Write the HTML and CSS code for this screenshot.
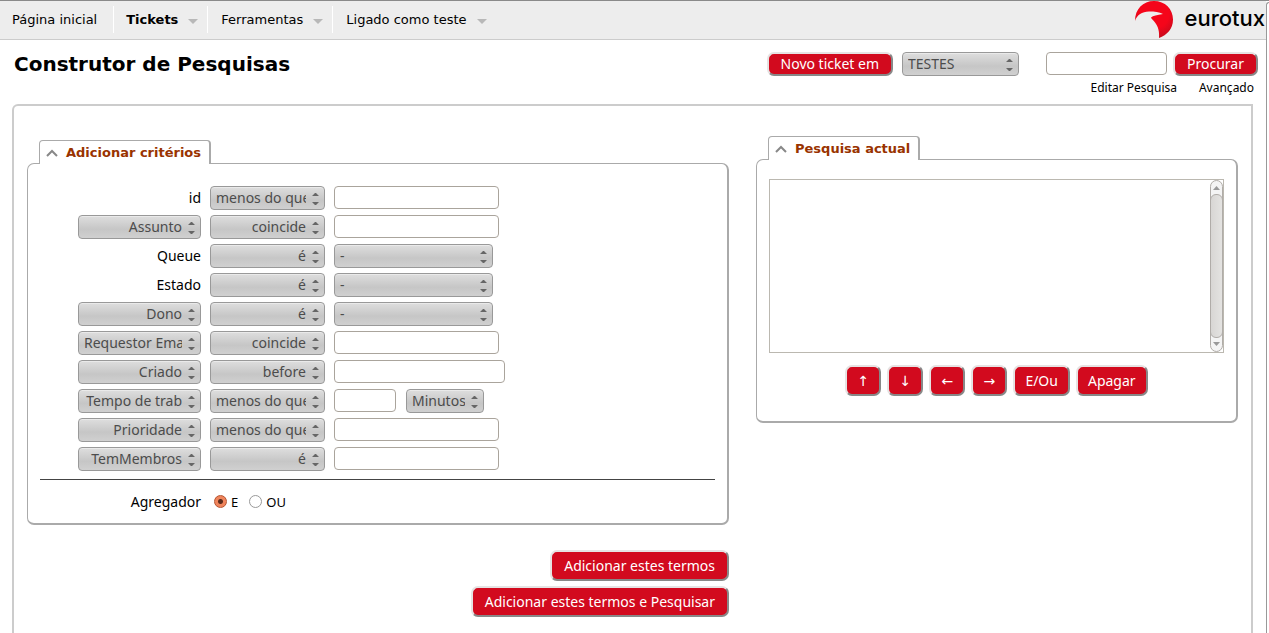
FILE: index.html
```html
<!DOCTYPE html>
<html lang="pt">
<head>
<meta charset="utf-8">
<title>Construtor de Pesquisas</title>
<link rel="stylesheet" href="styles.css">
</head>
<body>
<div class="page">
  <header class="topbar">
    <nav class="menu" aria-label="Principal">
      <a class="menu-item" href="#">Página inicial</a>
      <a class="menu-item menu-current" href="#">Tickets<span class="caret"></span></a>
      <a class="menu-item" href="#">Ferramentas<span class="caret"></span></a>
      <a class="menu-item" href="#">Ligado como teste<span class="caret"></span></a>
    </nav>
    <a class="brand" href="#">
      <svg class="brand-mark" viewBox="0 0 40 38" width="40" height="38" aria-hidden="true">
        <defs><radialGradient id="red" cx=".5" cy=".35" r=".65"><stop offset=".6" stop-color="#f5051a"/><stop offset="1" stop-color="#c90a1c"/></radialGradient></defs>
        <path fill="url(#red)" d="M0 20C0 8 8 0 19 0C30 0 38 8 38 18.500C38 28 32 34 24 37C24.500 31 23.500 26 20 21.500C18.500 19.500 16.500 18 16 16.500C18 14.500 22 14 28 13C24 11 20 10.500 14 10.500C7 10.500 2 14 0 20Z"/>
      </svg>
      <span class="brand-name">eurotux</span>
    </a>
  </header>

  <div class="titlebar">
    <h1>Construtor de Pesquisas</h1>
    <form class="new-ticket">
      <button class="btn btn-small" type="button">Novo ticket em</button>
      <select class="select queue" aria-label="Queue"><option>TESTES</option></select>
    </form>
    <form class="search">
      <div class="search-row">
        <input class="field search-field" type="text" aria-label="Procurar">
        <button class="btn btn-small" type="button">Procurar</button>
      </div>
      <div class="links"><a href="#">Editar Pesquisa</a><a href="#">Avançado</a></div>
    </form>
  </div>

  <main class="content">
    <form class="criteria">
      <h2 class="tab"><svg class="chevron" viewBox="0 0 12 8" width="12" height="8" aria-hidden="true"><path d="M1 7L6 2L11 7"/></svg>Adicionar critérios</h2>
      <div class="panel">
        <div class="terms">
          <label for="v-id">id</label>
          <select class="select right" aria-label="id operador"><option>menos do que</option></select>
          <div><input class="field wide" id="v-id" type="text"></div>

          <select class="select right" aria-label="Campo"><option>Assunto</option></select>
          <select class="select right" aria-label="Assunto operador"><option>coincide</option></select>
          <div><input class="field wide" type="text" aria-label="Assunto"></div>

          <label for="v-queue">Queue</label>
          <select class="select right" aria-label="Queue operador"><option>é</option></select>
          <div><select class="select list" id="v-queue"><option>-</option></select></div>

          <label for="v-estado">Estado</label>
          <select class="select right" aria-label="Estado operador"><option>é</option></select>
          <div><select class="select list" id="v-estado"><option>-</option></select></div>

          <select class="select right" aria-label="Pessoa"><option>Dono</option></select>
          <select class="select right" aria-label="Dono operador"><option>é</option></select>
          <div><select class="select list" aria-label="Dono"><option>-</option></select></div>

          <select class="select right" aria-label="Observador"><option>Requestor EmailAddress</option></select>
          <select class="select right" aria-label="Requestor operador"><option>coincide</option></select>
          <div><input class="field wide" type="text" aria-label="Requestor"></div>

          <select class="select right" aria-label="Data"><option>Criado</option></select>
          <select class="select right" aria-label="Data operador"><option>before</option></select>
          <div><input class="field date" type="text" aria-label="Criado"></div>

          <select class="select right" aria-label="Tempo"><option>Tempo de trab</option></select>
          <select class="select right" aria-label="Tempo operador"><option>menos do que</option></select>
          <div class="pair"><input class="field short" type="text" aria-label="Tempo de trabalho"><select class="select unit" aria-label="Unidade"><option>Minutos</option></select></div>

          <select class="select right" aria-label="Prioridade campo"><option>Prioridade</option></select>
          <select class="select right" aria-label="Prioridade operador"><option>menos do que</option></select>
          <div><input class="field wide" type="text" aria-label="Prioridade"></div>

          <select class="select right" aria-label="Ligação"><option>TemMembros</option></select>
          <select class="select right" aria-label="Ligação operador"><option>é</option></select>
          <div><input class="field wide" type="text" aria-label="TemMembros"></div>
        </div>
        <hr>
        <div class="aggregator" role="radiogroup" aria-labelledby="agg">
          <span class="aggregator-label" id="agg">Agregador</span>
          <label class="choice"><input type="radio" name="agg" checked>E</label>
          <label class="choice"><input type="radio" name="agg">OU</label>
        </div>
      </div>
      <div class="submit">
        <button class="btn btn-wide" type="button">Adicionar estes termos</button>
        <button class="btn btn-wide" type="button">Adicionar estes termos e Pesquisar</button>
      </div>
    </form>

    <form class="current">
      <h2 class="tab"><svg class="chevron" viewBox="0 0 12 8" width="12" height="8" aria-hidden="true"><path d="M1 7L6 2L11 7"/></svg>Pesquisa actual</h2>
      <div class="panel">
        <div class="clauses">
          <select class="clause-list" multiple aria-label="Pesquisa actual"></select>
          <div class="scroll" aria-hidden="true">
            <svg viewBox="0 0 7 4" width="7" height="4"><path d="M0 4L3.500 0L7 4Z"/></svg>
            <span class="thumb"></span>
            <svg viewBox="0 0 7 4" width="7" height="4"><path d="M0 0L3.500 4L7 0Z"/></svg>
          </div>
        </div>
        <div class="actions">
          <button class="btn arrow" type="button">↑</button>
          <button class="btn arrow" type="button">↓</button>
          <button class="btn arrow" type="button">←</button>
          <button class="btn arrow" type="button">→</button>
          <button class="btn" type="button">E/Ou</button>
          <button class="btn" type="button">Apagar</button>
        </div>
      </div>
    </form>
  </main>
</div>
<div class="edge"></div>
</body>
</html>
```

FILE: styles.css
```css
* { box-sizing: border-box; }

body {
  margin: 0;
  display: grid;
  grid-template-columns: 1fr 3px;
  height: 100vh;
  overflow: hidden;
  background: #fff;
  border-top: 1px solid #8a8a8a;
  color: #000;
  font: 14px/20px "Noto Sans", "Open Sans", sans-serif;
}

a { color: inherit; text-decoration: none; }
button, input, select { font: inherit; margin: 0; }

.page { display: flex; flex-direction: column; min-width: 0; }
.edge { margin-top: 1px; border-left: 1px solid #999; border-top: 1px solid #999; border-top-left-radius: 4px; background: #fff; }

.topbar {
  display: flex;
  justify-content: space-between;
  height: 39px;
  background: #ededed;
  border-bottom: 1px solid #ccc;
  font-family: "DejaVu Sans", sans-serif;
}
.menu { display: flex; margin: 5px 0 6px; font-size: 13px; }
.menu-item { display: flex; align-items: center; padding: 0 9px 0 13px; border-left: 1px solid #fff; }
.menu-item:first-child { padding: 0 16px 0 12px; border: 0; }
.menu-current { padding-left: 12px; font-weight: bold; }
.menu-item:last-child { padding-right: 0; }
.caret { margin: 3px 0 0 10px; border: 5px solid transparent; border-top-color: #b8b8b8; border-bottom: 0; }
.brand { display: flex; gap: 9px; padding-right: 1px; }
.brand-name { font: 500 22px/34px Inter, "DejaVu Sans", sans-serif; }

.titlebar { display: flex; align-items: flex-start; padding: 12px 8px 0 14px; height: 64px; }
h1 { flex: 1; margin: 0; font: bold 20px/24px "DejaVu Sans", sans-serif; }
.new-ticket { display: flex; gap: 9px; margin-right: 27px; }
.search-row { display: flex; gap: 6px; }
.links {
  display: flex;
  justify-content: flex-end;
  gap: 22px;
  padding: 3px 4px 0 0;
  font-size: 12px;
  line-height: 18px;
}

.btn {
  padding: 0 10px;
  height: 31px;
  border: 2px solid;
  border-color: #e6e3e3 #888 #888 #e6e3e3;
  border-radius: 7px;
  background: #d20a1e;
  color: #fff;
  line-height: 20px;
  white-space: nowrap;
}
.btn-small { height: 24px; padding: 0 12px; }
.btn-wide { padding: 0 12px; }

.field {
  display: block;
  height: 23px;
  padding: 0 5px;
  border: 1px solid #aaa49c;
  border-radius: 4px;
  background: #fff;
}
.select {
  display: block;
  appearance: none;
  height: 24px;
  width: 100%;
  padding: 0 18px 0 5px;
  border: 1px solid #999;
  border-radius: 4px;
  background:
    url("data:image/svg+xml,%3Csvg xmlns='http://www.w3.org/2000/svg' width='7' height='13'%3E%3Cpath fill='%23666' d='M0 4L3 1H4L7 4zM0 10L3 13H4L7 10z'/%3E%3C/svg%3E") right 5px center no-repeat,
    linear-gradient(#dedede, #c6c6c6 60%, #d0d0d0);
  box-shadow: inset 0 1px #eaeaea;
  color: #4c4c4c;
  line-height: 20px;
  opacity: 1;
}
.right { text-align: right; text-align-last: right; }
.queue { width: 117px; }
.search-field { width: 121px; }
.wide { width: 165px; }
.list { width: 159px; }
.date { width: 171px; }
.short { width: 62px; }
.unit { width: 78px; }

.content {
  flex: 1;
  display: grid;
  grid-template-columns: 702fr 482fr;
  gap: 27px;
  align-items: start;
  margin: 0 13px 0 12px;
  padding: 0 13px;
  border: 2px solid #ccc;
  border-bottom: 0;
  border-top-left-radius: 6px;
}
.criteria { padding-top: 34px; }
.current { padding-top: 30px; }

.tab {
  position: relative;
  display: flex;
  align-items: center;
  gap: 8px;
  width: max-content;
  height: 24px;
  margin: 0 0 -1px 12px;
  padding: 0 8px 0 6px;
  border: 1px solid #aaa;
  border-right-width: 2px;
  border-bottom: 0;
  border-radius: 4px 4px 0 0;
  background: #fff;
  color: #993300;
  font: bold 13px/20px "DejaVu Sans", sans-serif;
}
.chevron { fill: none; stroke: #888; stroke-width: 2; }

.panel {
  padding: 0 12px;
  border: 1px solid #aaa;
  border-right-width: 2px;
  border-bottom-width: 2px;
  border-radius: 7px;
}

.terms {
  display: grid;
  grid-template-columns: 123px 115px 1fr;
  gap: 5px 9px;
  padding: 22px 0 0 38px;
}
.terms > label { text-align: right; line-height: 24px; }
.pair { display: flex; gap: 10px; }

hr { margin: 8px 0 0; border: 0; border-top: 1px solid #444; }
.aggregator { display: flex; align-items: center; height: 43px; padding-left: 38px; }
.aggregator-label { width: 123px; margin-right: 13px; text-align: right; }
.choice { display: flex; align-items: center; gap: 4px; margin-right: 11px; font-size: 13px; }
.choice input {
  appearance: none;
  width: 13px;
  height: 13px;
  border: 1px solid #999;
  border-radius: 50%;
  background: #fff;
}
.choice input:checked { border-color: #b5532f; background: radial-gradient(circle, #5c2c1c 2px, #f0855c 3px); }

.submit { display: flex; flex-direction: column; align-items: flex-end; gap: 5px; margin-top: 25px; }

.current .panel { padding-bottom: 25px; }
.clauses { display: flex; height: 174px; margin: 19px 0 12px; border: 1px solid #bbb8b0; }
.clause-list { flex: 1; min-width: 0; height: 100%; border: 0; background: #fff; overflow: hidden; outline: 0; }
.scroll {
  display: flex;
  flex-direction: column;
  align-items: center;
  gap: 4px;
  width: 13px;
  padding: 5px 0;
  border: 1px solid #b0aca8;
  border-radius: 7px;
  background: #f4f4f4;
  fill: #999;
}
.thumb { flex: 1; width: 13px; border: 1px solid #b0aca8; border-radius: 6px; background: linear-gradient(90deg, #d8d6d4, #e4e3e1); }
.actions { display: flex; justify-content: center; gap: 6px; }
.arrow { width: 36px; padding: 0; font-family: "DejaVu Sans", sans-serif; }
```
